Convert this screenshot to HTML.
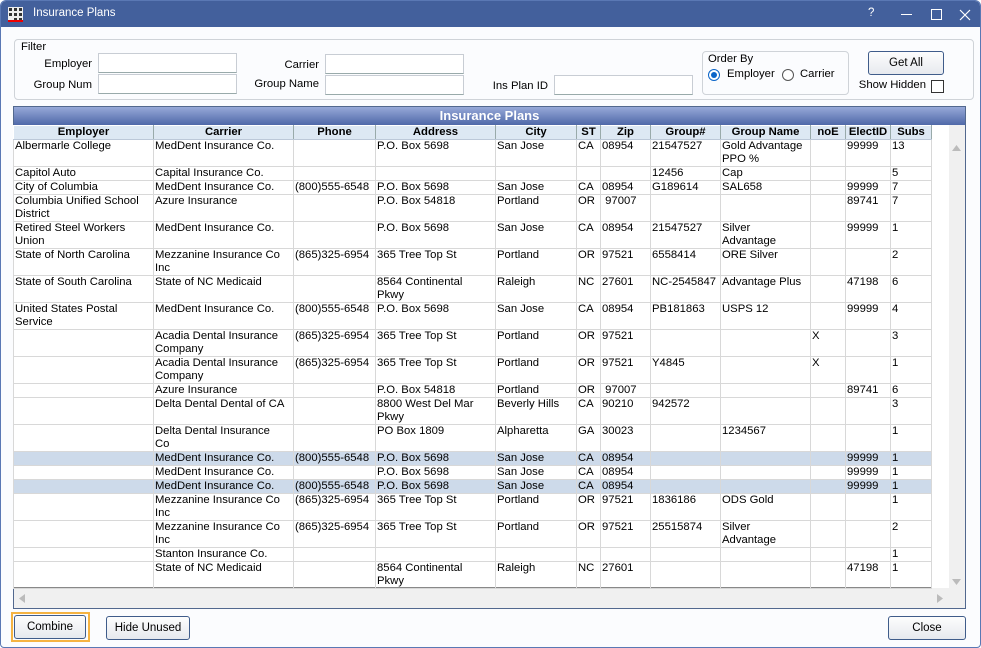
<!DOCTYPE html>
<html><head><meta charset="utf-8"><style>
*{box-sizing:border-box;margin:0;padding:0}
body{width:981px;height:648px;overflow:hidden;background:#fff;font-family:"Liberation Sans",Arial,sans-serif;font-size:11.3px;color:#000;position:relative}
.win{position:absolute;left:0;top:0;width:981px;height:648px;border:1px solid #5a78b4;border-radius:6px 6px 4px 4px;background:#fbfcfe;overflow:hidden}
.title{position:absolute;left:0;top:0;width:981px;height:26px;background:#43609c;color:#fff;font-size:11.5px}
.abs{position:absolute}
.inp{position:absolute;height:20px;background:#fff;border:1px solid #c8cdd4;border-bottom-color:#9aa}
.lbl{position:absolute;font-size:11.3px;white-space:nowrap}
.r{text-align:right}
.btn{position:absolute;border:1px solid #3f5c8a;border-radius:3px;background:linear-gradient(#fdfdfd,#e6e9ee);text-align:center;font-size:11.5px}
table{border-collapse:collapse;table-layout:fixed;position:absolute;left:12px;top:124px}
td,th{border:1px solid #d8d8d8;vertical-align:top;padding:0 1px;font-size:11.3px;line-height:13px;overflow:hidden;white-space:nowrap;font-weight:normal}
th{background:#dde8f3;font-weight:bold;text-align:center;height:14px;border-color:#fff #9aa #c8d4e0 #fff;border-bottom:1px solid #bcc8d8}
tr.h td{background:#cddaea}
</style></head><body>
<div class="win">
<div class="title">
 <svg class="abs" style="left:7px;top:6px" width="15" height="15"><rect x="0" y="0" width="15" height="15" fill="#eee"/><g fill="#333"><rect x="1" y="1" width="3" height="3"/><rect x="6" y="1" width="3" height="3"/><rect x="11" y="1" width="3" height="3"/><rect x="1" y="6" width="3" height="3"/><rect x="6" y="6" width="3" height="3"/><rect x="11" y="6" width="3" height="3"/><rect x="6" y="11" width="3" height="3"/><rect x="11" y="11" width="3" height="3"/></g><rect x="0" y="13" width="15" height="2" fill="#e00"/></svg>
 <div class="abs" style="left:32px;top:6px">Insurance Plans</div>
 <div class="abs" style="left:867px;top:6px">?</div>
 <div class="abs" style="left:900px;top:13px;width:11px;height:1px;background:#fff"></div>
 <div class="abs" style="left:930px;top:8px;width:11px;height:11px;border:1px solid #fff"></div>
 <svg class="abs" style="left:958px;top:8px" width="12" height="12"><path d="M1 1L11 11M11 1L1 11" stroke="#fff" stroke-width="1.2"/></svg>
</div>
<div class="abs" style="left:13px;top:38px;width:960px;height:61px;border:1px solid #cfd3d8;border-radius:4px"></div>
<div class="lbl" style="left:20px;top:40px">Filter</div>
<div class="lbl r" style="left:0;width:91px;top:57px">Employer</div>
<div class="inp" style="left:97px;top:52px;width:139px"></div>
<div class="lbl r" style="left:0;width:91px;top:78px">Group Num</div>
<div class="inp" style="left:97px;top:73px;width:139px"></div>
<div class="lbl r" style="left:200px;width:118px;top:58px">Carrier</div>
<div class="inp" style="left:324px;top:53px;width:139px"></div>
<div class="lbl r" style="left:200px;width:118px;top:77px">Group Name</div>
<div class="inp" style="left:324px;top:74px;width:139px"></div>
<div class="lbl r" style="left:450px;width:97px;top:79px">Ins Plan ID</div>
<div class="inp" style="left:553px;top:74px;width:139px"></div>
<div class="abs" style="left:701px;top:50px;width:147px;height:44px;border:1px solid #cfd3d8;border-radius:4px"></div>
<div class="lbl" style="left:707px;top:52px">Order By</div>
<div class="abs" style="left:707px;top:68px;width:12px;height:12px;border-radius:50%;border:1px solid #0a64c8;background:#fff"><div class="abs" style="left:2px;top:2px;width:6px;height:6px;border-radius:50%;background:#0a64c8"></div></div>
<div class="lbl" style="left:726px;top:67px">Employer</div>
<div class="abs" style="left:781px;top:68px;width:12px;height:12px;border-radius:50%;border:1px solid #555;background:#fff"></div>
<div class="lbl" style="left:799px;top:67px">Carrier</div>
<div class="btn" style="left:867px;top:50px;width:76px;height:24px;line-height:22px">Get All</div>
<div class="lbl r" style="left:840px;width:85px;top:78px">Show Hidden</div>
<div class="abs" style="left:930px;top:79px;width:13px;height:13px;border:1px solid #333;background:#fff"></div>

<div class="abs" style="left:12px;top:105px;width:953px;height:503px;border:1px solid #52688e;background:#f0f0f0"></div>
<div class="abs" style="left:13px;top:106px;width:951px;height:18px;background:linear-gradient(#97a9d8,#4f68a8);color:#fff;font-weight:bold;font-size:13px;text-align:center;line-height:18px">Insurance Plans</div>
<div class="abs" style="left:13px;top:124px;width:935px;height:463px;background:#fff"></div>
<div class="abs" style="left:13px;top:586px;width:917px;height:1px;background:#888"></div>
<svg class="abs" style="left:950px;top:143px" width="11" height="8"><path d="M1 7L5.5 1L10 7Z" fill="#bbb"/></svg>
<svg class="abs" style="left:950px;top:577px" width="11" height="8"><path d="M1 1L5.5 7L10 1Z" fill="#bbb"/></svg>
<svg class="abs" style="left:17px;top:592px" width="8" height="11"><path d="M7 1L1 5.5L7 10Z" fill="#bbb"/></svg>
<svg class="abs" style="left:935px;top:592px" width="8" height="11"><path d="M1 1L7 5.5L1 10Z" fill="#bbb"/></svg>

<table>
<colgroup><col style="width:140px"><col style="width:140px"><col style="width:82px"><col style="width:120px"><col style="width:81px"><col style="width:24px"><col style="width:50px"><col style="width:70px"><col style="width:90px"><col style="width:35px"><col style="width:45px"><col style="width:41px"></colgroup>
<tr><th>Employer</th><th>Carrier</th><th>Phone</th><th>Address</th><th>City</th><th>ST</th><th>Zip</th><th>Group#</th><th>Group Name</th><th>noE</th><th>ElectID</th><th>Subs</th></tr>
<tr style="height:27px"><td>Albermarle College</td><td>MedDent Insurance Co.</td><td></td><td>P.O. Box 5698</td><td>San Jose</td><td>CA</td><td>08954</td><td>21547527</td><td>Gold Advantage<br>PPO %</td><td></td><td>99999</td><td>13</td></tr>
<tr style="height:14px"><td>Capitol Auto</td><td>Capital Insurance Co.</td><td></td><td></td><td></td><td></td><td></td><td>12456</td><td>Cap</td><td></td><td></td><td>5</td></tr>
<tr style="height:14px"><td>City of Columbia</td><td>MedDent Insurance Co.</td><td>(800)555-6548</td><td>P.O. Box 5698</td><td>San Jose</td><td>CA</td><td>08954</td><td>G189614</td><td>SAL658</td><td></td><td>99999</td><td>7</td></tr>
<tr style="height:27px"><td>Columbia Unified School<br>District</td><td>Azure Insurance</td><td></td><td>P.O. Box 54818</td><td>Portland</td><td>OR</td><td>&nbsp;97007</td><td></td><td></td><td></td><td>89741</td><td>7</td></tr>
<tr style="height:27px"><td>Retired Steel Workers<br>Union</td><td>MedDent Insurance Co.</td><td></td><td>P.O. Box 5698</td><td>San Jose</td><td>CA</td><td>08954</td><td>21547527</td><td>Silver<br>Advantage</td><td></td><td>99999</td><td>1</td></tr>
<tr style="height:27px"><td>State of North Carolina</td><td>Mezzanine Insurance Co<br>Inc</td><td>(865)325-6954</td><td>365 Tree Top St</td><td>Portland</td><td>OR</td><td>97521</td><td>6558414</td><td>ORE Silver</td><td></td><td></td><td>2</td></tr>
<tr style="height:27px"><td>State of South Carolina</td><td>State of NC Medicaid</td><td></td><td>8564 Continental<br>Pkwy</td><td>Raleigh</td><td>NC</td><td>27601</td><td>NC-2545847</td><td>Advantage Plus</td><td></td><td>47198</td><td>6</td></tr>
<tr style="height:27px"><td>United States Postal<br>Service</td><td>MedDent Insurance Co.</td><td>(800)555-6548</td><td>P.O. Box 5698</td><td>San Jose</td><td>CA</td><td>08954</td><td>PB181863</td><td>USPS 12</td><td></td><td>99999</td><td>4</td></tr>
<tr style="height:27px"><td></td><td>Acadia Dental Insurance<br>Company</td><td>(865)325-6954</td><td>365 Tree Top St</td><td>Portland</td><td>OR</td><td>97521</td><td></td><td></td><td>X</td><td></td><td>3</td></tr>
<tr style="height:27px"><td></td><td>Acadia Dental Insurance<br>Company</td><td>(865)325-6954</td><td>365 Tree Top St</td><td>Portland</td><td>OR</td><td>97521</td><td>Y4845</td><td></td><td>X</td><td></td><td>1</td></tr>
<tr style="height:14px"><td></td><td>Azure Insurance</td><td></td><td>P.O. Box 54818</td><td>Portland</td><td>OR</td><td>&nbsp;97007</td><td></td><td></td><td></td><td>89741</td><td>6</td></tr>
<tr style="height:27px"><td></td><td>Delta Dental Dental of CA</td><td></td><td>8800 West Del Mar<br>Pkwy</td><td>Beverly Hills</td><td>CA</td><td>90210</td><td>942572</td><td></td><td></td><td></td><td>3</td></tr>
<tr style="height:27px"><td></td><td>Delta Dental Insurance<br>Co</td><td></td><td>PO Box 1809</td><td>Alpharetta</td><td>GA</td><td>30023</td><td></td><td>1234567</td><td></td><td></td><td>1</td></tr>
<tr class="h" style="height:14px"><td></td><td>MedDent Insurance Co.</td><td>(800)555-6548</td><td>P.O. Box 5698</td><td>San Jose</td><td>CA</td><td>08954</td><td></td><td></td><td></td><td>99999</td><td>1</td></tr>
<tr style="height:14px"><td></td><td>MedDent Insurance Co.</td><td></td><td>P.O. Box 5698</td><td>San Jose</td><td>CA</td><td>08954</td><td></td><td></td><td></td><td>99999</td><td>1</td></tr>
<tr class="h" style="height:14px"><td></td><td>MedDent Insurance Co.</td><td>(800)555-6548</td><td>P.O. Box 5698</td><td>San Jose</td><td>CA</td><td>08954</td><td></td><td></td><td></td><td>99999</td><td>1</td></tr>
<tr style="height:27px"><td></td><td>Mezzanine Insurance Co<br>Inc</td><td>(865)325-6954</td><td>365 Tree Top St</td><td>Portland</td><td>OR</td><td>97521</td><td>1836186</td><td>ODS Gold</td><td></td><td></td><td>1</td></tr>
<tr style="height:27px"><td></td><td>Mezzanine Insurance Co<br>Inc</td><td>(865)325-6954</td><td>365 Tree Top St</td><td>Portland</td><td>OR</td><td>97521</td><td>25515874</td><td>Silver<br>Advantage</td><td></td><td></td><td>2</td></tr>
<tr style="height:14px"><td></td><td>Stanton Insurance Co.</td><td></td><td></td><td></td><td></td><td></td><td></td><td></td><td></td><td></td><td>1</td></tr>
<tr style="height:26px"><td></td><td>State of NC Medicaid</td><td></td><td>8564 Continental<br>Pkwy</td><td>Raleigh</td><td>NC</td><td>27601</td><td></td><td></td><td></td><td>47198</td><td>1</td></tr>
</table>

<div class="abs" style="left:10px;top:611px;width:79px;height:30px;border:2px solid #f5b342"></div>
<div class="btn" style="left:13px;top:614px;width:72px;height:24px;line-height:22px">Combine</div>
<div class="btn" style="left:105px;top:615px;width:84px;height:24px;line-height:22px">Hide Unused</div>
<div class="btn" style="left:887px;top:615px;width:78px;height:24px;line-height:22px">Close</div>
</div>
</body></html>
